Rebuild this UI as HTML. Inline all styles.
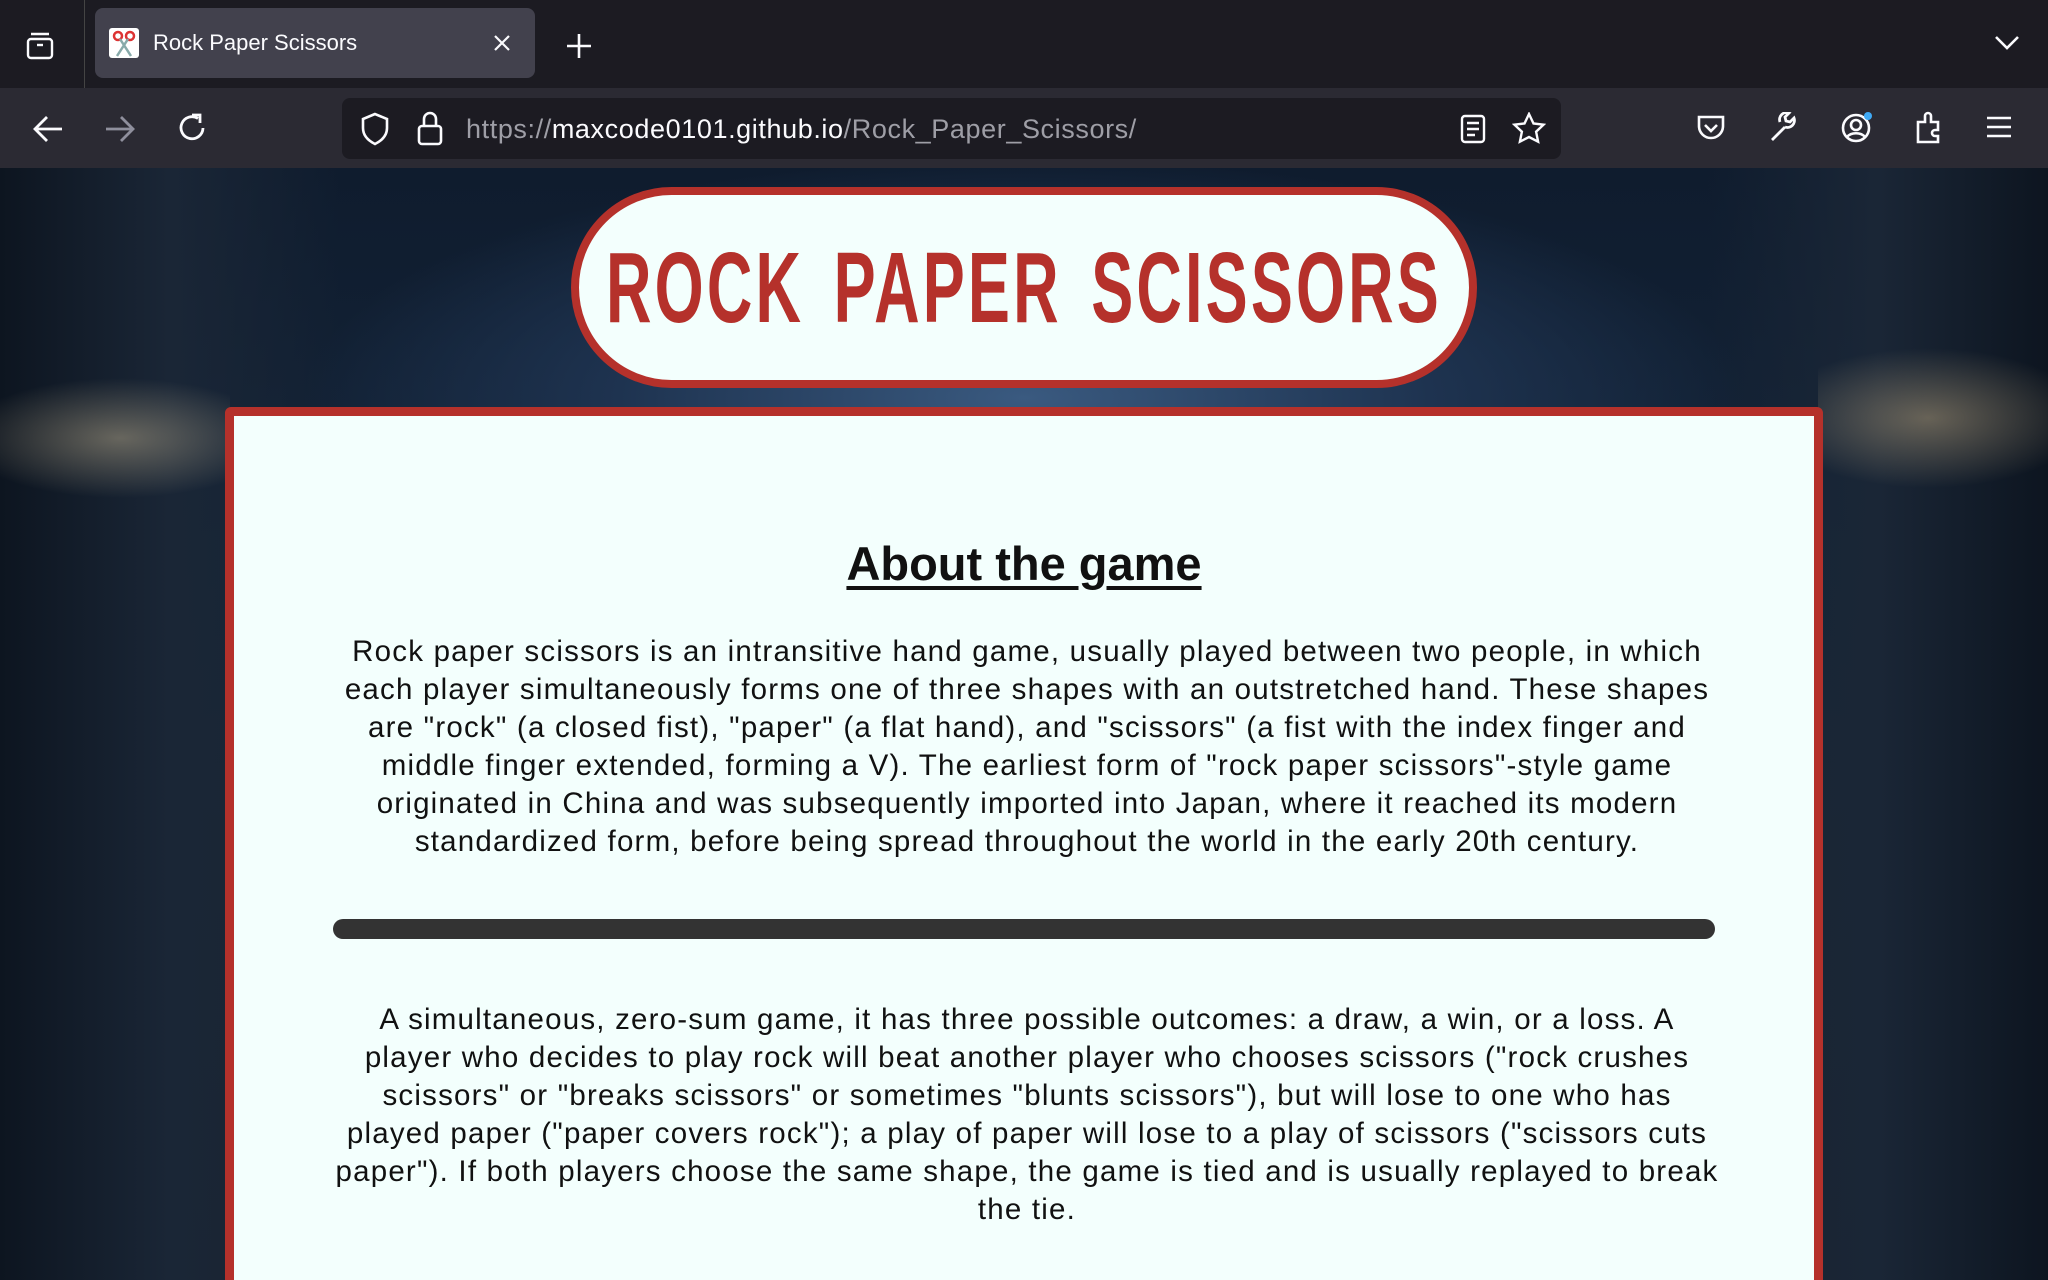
<!DOCTYPE html>
<html><head><meta charset="utf-8"><style>
*{margin:0;padding:0;box-sizing:border-box}
body{width:2048px;height:1280px;overflow:hidden;background:#1c1b22;font-family:"Liberation Sans",sans-serif;position:relative}
.tabbar{position:absolute;left:0;top:0;width:2048px;height:88px;background:#1c1b22}
.tab{position:absolute;left:95px;top:8px;width:440px;height:70px;background:#42414d;border-radius:8px}
.tab .t{position:absolute;left:58px;top:22px;color:#fbfbfe;font-size:22px}
.nav{position:absolute;left:0;top:88px;width:2048px;height:80px;background:#2b2a33}
.url{position:absolute;left:342px;top:10px;width:1219px;height:61px;background:#1c1b22;border-radius:8px}
.url .u{position:absolute;left:124px;top:16px;font-size:27px;color:#9e9ea6;letter-spacing:0.6px}
.url .u b{font-weight:normal;color:#fbfbfe}
svg.i{position:absolute}
.page{position:absolute;left:0;top:168px;width:2048px;height:1112px;overflow:hidden;
background:radial-gradient(ellipse 900px 300px at 1024px 230px,#3a5a80 0%,#1e3350 45%,transparent 80%),
linear-gradient(180deg,#0f1c2e 0%,#142438 35%,#1a2533 60%,#1a2230 100%)}
.side{position:absolute;top:0;width:340px;height:1112px}
.pill{position:absolute;left:571px;top:19px;width:906px;height:201px;border:8px solid #b5312b;border-radius:101px;background:#f3fffd;overflow:hidden}
.pill span{position:absolute;left:50%;top:38px;white-space:nowrap;font-weight:bold;font-size:100px;line-height:110px;color:#b5312b;letter-spacing:5px;word-spacing:14px;transform:translateX(-50%) scaleX(0.63)}
.card{position:absolute;left:225px;top:239px;width:1598px;height:1000px;border:9px solid #b5312b;border-radius:6px;background:#f3fffd}
h1{position:absolute;left:0;right:0;top:120px;text-align:center;font-size:47px;font-weight:bold;text-decoration:underline;text-underline-offset:6px;color:#111}
p{position:absolute;left:43px;width:1500px;text-align:center;font-size:29.5px;line-height:38px;color:#111;letter-spacing:1.2px;white-space:nowrap}
.bar{position:absolute;left:99px;top:503px;width:1382px;height:20px;border-radius:10px;background:#333}
</style></head><body>
<div class="tabbar">
<svg class="i" style="left:24px;top:30px" width="32" height="32" viewBox="0 0 32 32" fill="none" stroke="#fbfbfe" stroke-width="2.4"><rect x="4" y="9" width="24" height="19" rx="3"/><path d="M7 4h18"/><path d="M13 15h6"/></svg>
<div style="position:absolute;left:84px;top:0;width:1px;height:88px;background:#444"></div>
<div class="tab">
<svg class="i" style="left:14px;top:20px" width="30" height="30" viewBox="0 0 30 30"><rect width="30" height="30" rx="3" fill="#fff"/><circle cx="9" cy="8" r="4" fill="none" stroke="#d33" stroke-width="2.5"/><circle cx="21" cy="8" r="4" fill="none" stroke="#d33" stroke-width="2.5"/><path d="M11 11L22 28M19 11L8 28" stroke="#8aa" stroke-width="2.5"/></svg>
<div class="t">Rock Paper Scissors</div>
<svg class="i" style="left:398px;top:26px" width="18" height="18" viewBox="0 0 18 18" stroke="#fbfbfe" stroke-width="2.2"><path d="M2 2L16 16M16 2L2 16"/></svg>
</div>
<svg class="i" style="left:565px;top:32px" width="28" height="28" viewBox="0 0 28 28" stroke="#fbfbfe" stroke-width="2.6"><path d="M14 2v24M2 14h24"/></svg>
<svg class="i" style="left:1994px;top:34px" width="26" height="18" viewBox="0 0 26 18" fill="none" stroke="#fbfbfe" stroke-width="2.6"><path d="M2 3l11 11L24 3"/></svg>
</div>
<div class="nav">
<svg class="i" style="left:32px;top:26px" width="32" height="30" viewBox="0 0 32 30" fill="none" stroke="#fbfbfe" stroke-width="2.8"><path d="M30 15H4M15 3L3 15l12 12"/></svg>
<svg class="i" style="left:104px;top:26px" width="32" height="30" viewBox="0 0 32 30" fill="none" stroke="#8f8f9d" stroke-width="2.8"><path d="M2 15h26M17 3l12 12-12 12"/></svg>
<svg class="i" style="left:176px;top:23px" width="32" height="34" viewBox="0 0 32 34" fill="none" stroke="#fbfbfe" stroke-width="2.8"><path d="M27 17A11 11 0 1 1 22 7.5"/><path d="M16 4h8v8" /></svg>
<div class="url">
<svg class="i" style="left:18px;top:14px" width="30" height="34" viewBox="0 0 30 34" fill="none" stroke="#fbfbfe" stroke-width="2.6"><path d="M15 2L3 7v9c0 8 6 13 12 16 6-3 12-8 12-16V7z"/></svg>
<svg class="i" style="left:74px;top:12px" width="28" height="36" viewBox="0 0 28 36" fill="none" stroke="#fbfbfe" stroke-width="2.6"><rect x="3" y="16" width="22" height="18" rx="3"/><path d="M8 16V9a6 6 0 0 1 12 0v7"/></svg>
<div class="u">https://<b>maxcode0101.github.io</b>/Rock_Paper_Scissors/</div>
<svg class="i" style="left:1118px;top:16px" width="26" height="30" viewBox="0 0 26 30" fill="none" stroke="#fbfbfe" stroke-width="2.4"><rect x="2" y="2" width="22" height="26" rx="3"/><path d="M7 9h12M7 15h12M7 21h8"/></svg>
<svg class="i" style="left:1170px;top:14px" width="34" height="32" viewBox="0 0 34 32" fill="none" stroke="#fbfbfe" stroke-width="2.4"><path d="M17 2l4.5 9.5 10 1.2-7.4 7 2 10L17 25l-9.1 4.7 2-10-7.4-7 10-1.2z"/></svg>
</div>
<svg class="i" style="left:1696px;top:26px" width="30" height="28" viewBox="0 0 30 28" fill="none" stroke="#fbfbfe" stroke-width="2.6"><path d="M3 3h24v9a12 12 0 0 1-24 0z"/><path d="M9 11l6 6 6-6"/></svg>
<svg class="i" style="left:1768px;top:24px" width="32" height="32" viewBox="0 0 32 32" fill="none" stroke="#fbfbfe" stroke-width="2.8"><path d="M4 28l13-13M17 15a7 7 0 0 0 9-9l-4 4-4-1-1-4 4-4a7 7 0 0 0-9 9"/></svg>
<svg class="i" style="left:1840px;top:22px" width="34" height="34" viewBox="0 0 34 34" fill="none" stroke="#fbfbfe" stroke-width="2.6"><circle cx="16" cy="18" r="13"/><circle cx="16" cy="15" r="5"/><path d="M7 27c4-5 14-5 18 0"/><circle cx="28" cy="6" r="4" fill="#3fa9f5" stroke="none"/></svg>
<svg class="i" style="left:1914px;top:22px" width="30" height="34" viewBox="0 0 30 34" fill="none" stroke="#fbfbfe" stroke-width="2.6"><path d="M4 12h7V6a3 3 0 0 1 6 0v6h7v8h-3a3 3 0 0 0 0 6h3v6H4z"/></svg>
<svg class="i" style="left:1986px;top:28px" width="26" height="22" viewBox="0 0 26 22" stroke="#fbfbfe" stroke-width="2.6"><path d="M1 2h24M1 11h24M1 20h24"/></svg>
</div>
<div class="page">
<div class="side" style="left:0;background:linear-gradient(90deg,#0d1520 0%,#1a2636 50%,transparent 100%)"></div>
<div class="side" style="right:0;background:linear-gradient(270deg,#0d1520 0%,#1a2636 50%,transparent 100%)"></div>
<div style="position:absolute;left:0;top:150px;width:230px;height:200px;background:radial-gradient(ellipse 160px 60px at 120px 120px,rgba(255,230,180,.35),transparent)"></div>
<div style="position:absolute;right:0;top:130px;width:230px;height:200px;background:radial-gradient(ellipse 160px 70px at 110px 120px,rgba(255,220,160,.35),transparent)"></div>
<div class="pill"><span>ROCK PAPER SCISSORS</span></div>
<div class="card">
<h1>About the game</h1>
<p style="top:217px">Rock paper scissors is an intransitive hand game, usually played between two people, in which<br>each player simultaneously forms one of three shapes with an outstretched hand. These shapes<br>are "rock" (a closed fist), "paper" (a flat hand), and "scissors" (a fist with the index finger and<br>middle finger extended, forming a V). The earliest form of "rock paper scissors"-style game<br>originated in China and was subsequently imported into Japan, where it reached its modern<br>standardized form, before being spread throughout the world in the early 20th century.</p>
<div class="bar"></div>
<p style="top:585px">A simultaneous, zero-sum game, it has three possible outcomes: a draw, a win, or a loss. A<br>player who decides to play rock will beat another player who chooses scissors ("rock crushes<br>scissors" or "breaks scissors" or sometimes "blunts scissors"), but will lose to one who has<br>played paper ("paper covers rock"); a play of paper will lose to a play of scissors ("scissors cuts<br>paper"). If both players choose the same shape, the game is tied and is usually replayed to break<br>the tie.</p>
</div>
</div>
</body></html>
